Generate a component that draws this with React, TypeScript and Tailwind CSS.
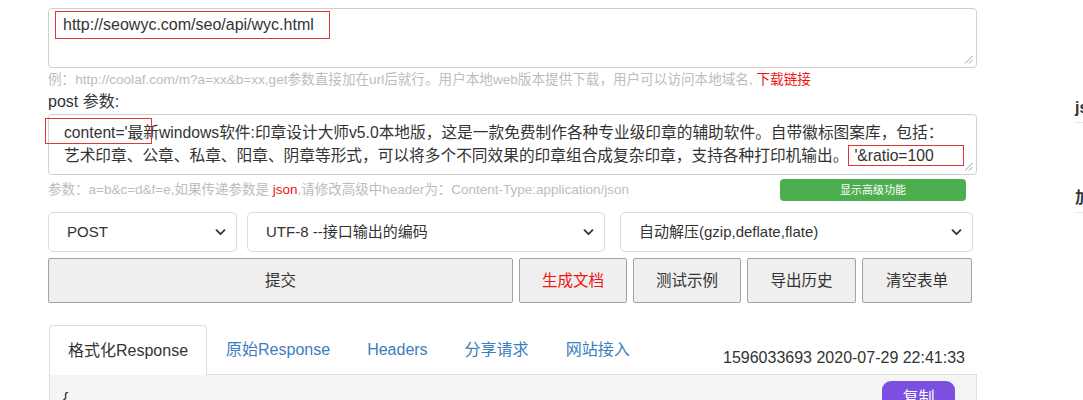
import React from 'react'

const tabs = ['原始Response', 'Headers', '分享请求', '网站接入']

function Grip() {
  return (
    <svg className="absolute bottom-[3px] right-[3px] w-[9px] h-[9px]" viewBox="0 0 9 9" fill="none">
      <path d="M8.5 1L1 8.5M8.5 5L5 8.5" stroke="#9a9a9a" strokeWidth="1" />
    </svg>
  )
}

function Chevron() {
  return (
    <svg className="w-[11px] h-[7px] shrink-0" viewBox="0 0 11 7" fill="none">
      <path d="M1.5 1.2l4 4 4-4" stroke="#333" strokeWidth="1.8" strokeLinecap="round" strokeLinejoin="round" />
    </svg>
  )
}

function FakeSelect({ label, width }: { label: string; width: string }) {
  return (
    <div className={`${width} h-[40px] border border-[#dcdcdc] rounded-[5px] bg-white flex items-center justify-between pl-[18px] pr-[10px] text-[15px] text-[#333]`}>
      <span className="whitespace-nowrap">{label}</span>
      <Chevron />
    </div>
  )
}

export default function App() {
  return (
    <div className="min-h-screen bg-white overflow-hidden font-['Liberation_Sans','Noto_Sans_CJK_SC',sans-serif] text-[#333]">
      <div className="flex">
        {/* 主表单 */}
        <div className="ml-[48px] w-[929px] shrink-0 pt-[8px]">
          <div className="relative h-[60px] border border-[#cfcfcf] rounded-[4px] pt-[2px] pl-[6px]">
            <div className="w-[275px] h-[28px] border border-[#e2363c] pl-[7px] leading-[26px] text-[16px] whitespace-nowrap">
              http://seowyc.com/seo/api/wyc.html
            </div>
            <Grip />
          </div>

          <p className="mt-[3px] text-[13.6px] leading-[18px] text-[#bdbdbd] whitespace-nowrap">
            例：http://coolaf.com/m?a=xx&amp;b=xx,get参数直接加在url后就行。用户本地web版本提供下载，用户可以访问本地域名,{' '}
            <span className="text-[#f0160f]">下载链接</span>
          </p>

          <p className="mt-[2px] text-[16px] leading-[22px]">post 参数:</p>

          <div className="relative mt-[1px] h-[61px] border border-[#cfcfcf] rounded-[4px] pt-[6px] pl-[15px] text-[15.7px] leading-[23px] whitespace-nowrap">
            <div>content='最新windows软件:印章设计大师v5.0本地版，这是一款免费制作各种专业级印章的辅助软件。自带徽标图案库，包括：</div>
            <div>
              艺术印章、公章、私章、阳章、阴章等形式，可以将多个不同效果的印章组合成复杂印章，支持各种打印机输出。
              <span className="inline-block w-[116px] border border-[#e2363c] pl-[5px] leading-[19px]">'&amp;ratio=100</span>
            </div>
            <div className="absolute left-[-4px] top-[3px] w-[107px] h-[26px] border border-[#e2363c]" />
            <Grip />
          </div>

          <div className="mt-[4px] flex items-center justify-between">
            <p className="text-[13.5px] leading-[18px] text-[#bdbdbd] whitespace-nowrap">
              参数：a=b&amp;c=d&amp;f=e,如果传递参数是 <span className="text-[#f0160f]">json</span>,请修改高级中header为：Content-Type:application/json
            </p>
            <button className="mr-[11px] w-[186px] h-[22px] rounded-[4px] bg-[#4cae4f] text-white text-[11px]">
              显示高级功能
            </button>
          </div>

          <div className="mt-[11px] flex">
            <FakeSelect label="POST" width="w-[189px]" />
            <div className="ml-[10px]">
              <FakeSelect label="UTF-8 --接口输出的编码" width="w-[358px]" />
            </div>
            <div className="ml-[15px]">
              <FakeSelect label="自动解压(gzip,deflate,flate)" width="w-[353px]" />
            </div>
          </div>

          <div className="mt-[6px] flex gap-[6px] text-[15.5px]">
            <button className="w-[465px] h-[45px] bg-[#efefef] border border-[#a3a3a3] rounded-[2px] text-[#333]">提交</button>
            <button className="w-[108px] h-[45px] bg-[#efefef] border border-[#a3a3a3] rounded-[2px] text-[#f0160f]">生成文档</button>
            <button className="w-[108px] h-[45px] bg-[#efefef] border border-[#a3a3a3] rounded-[2px] text-[#333]">测试示例</button>
            <button className="w-[109px] h-[45px] bg-[#efefef] border border-[#a3a3a3] rounded-[2px] text-[#333]">导出历史</button>
            <button className="w-[110px] h-[45px] bg-[#efefef] border border-[#a3a3a3] rounded-[2px] text-[#333]">清空表单</button>
          </div>

          {/* 响应标签 */}
          <div className="mt-[22px] flex h-[49px] text-[16px]">
            <div className="ml-[1px] h-[50px] px-[18px] flex items-center border border-b-0 border-[#dedede] rounded-t-[4px] bg-white relative z-10">
              格式化Response
            </div>
            {tabs.map(t => (
              <div key={t} className="ml-[1px] px-[18px] flex items-center text-[#3c7dc0] whitespace-nowrap">
                {t}
              </div>
            ))}
            <div className="ml-auto mr-[12px] self-end mb-[6px] leading-[20px] whitespace-nowrap">
              1596033693 2020-07-29 22:41:33
            </div>
          </div>
          <div className="ml-[1px] h-[80px] border border-[#dedede] rounded-b-[4px] bg-[#f5f5f5] flex justify-between pl-[13px] pr-[21px] pt-[6px]">
            <span className="text-[16px] leading-[20px] pt-[8px]">{'{'}</span>
            <button className="w-[73px] h-[34px] rounded-[9px] bg-[#7b4fe0] text-white text-[16px]">复制</button>
          </div>
        </div>

        {/* 右侧栏 */}
        <div className="ml-[98px] w-[200px] shrink-0">
          <h3 className="mt-[98px] pb-[4px] border-b border-[#e5e5e5] text-[16px] leading-[20px] font-bold text-[#333]">json</h3>
          <h3 className="mt-[65px] pb-[4px] border-b border-[#e5e5e5] text-[16px] leading-[20px] font-bold text-[#333]">加密</h3>
        </div>
      </div>
    </div>
  )
}
